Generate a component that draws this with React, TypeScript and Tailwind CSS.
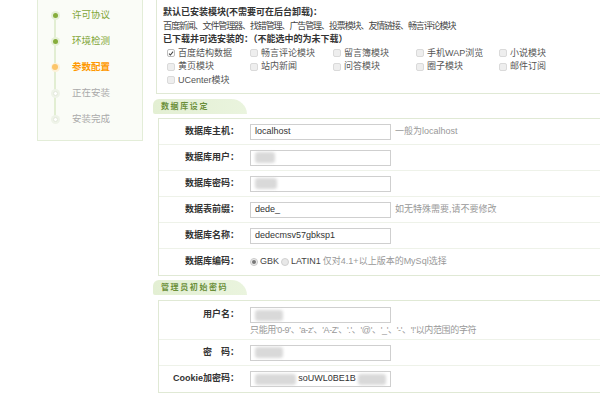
import React from 'react'

const steps = [
  { label: '许可协议', state: 'done' },
  { label: '环境检测', state: 'done' },
  { label: '参数配置', state: 'current' },
  { label: '正在安装', state: 'todo' },
  { label: '安装完成', state: 'todo' },
]

const modules = [
  { name: '百度结构数据', checked: true },
  { name: '畅言评论模块' },
  { name: '留言簿模块' },
  { name: '手机WAP浏览' },
  { name: '小说模块' },
  { name: '黄页模块' },
  { name: '站内新闻' },
  { name: '问答模块' },
  { name: '圈子模块' },
  { name: '邮件订阅' },
  { name: 'UCenter模块' },
]

function Dot({ state }: { state: string }) {
  if (state === 'done')
    return (
      <span className="flex h-[9px] w-[9px] items-center justify-center rounded-full bg-[#e6f0d8]">
        <span className="h-[5px] w-[5px] rounded-full bg-[#86ad3c]" />
      </span>
    )
  if (state === 'current')
    return (
      <span className="flex h-[9px] w-[9px] items-center justify-center rounded-full bg-[#fdf0d8]">
        <span className="h-[6px] w-[6px] rounded-full bg-[#fcc56a]" />
      </span>
    )
  return (
    <span className="flex h-[9px] w-[9px] items-center justify-center rounded-full bg-[#eef3e8]">
      <span className="h-[5px] w-[5px] rounded-full border border-[#e3e9dc] bg-white" />
    </span>
  )
}

function Checkbox({ checked }: { checked?: boolean }) {
  return (
    <span
      className={`flex h-[8px] w-[8px] shrink-0 items-center justify-center rounded-[2px] border ${
        checked ? 'border-[#bdbdbd] bg-white' : 'border-[#dadada] bg-[#eeeeee]'
      }`}
    >
      {checked && (
        <svg viewBox="0 0 8 8" className="h-[7px] w-[7px]">
          <path d="M1.3 4.2 L3.2 6 L6.8 1.6" fill="none" stroke="#444" strokeWidth="1.4" />
        </svg>
      )}
    </span>
  )
}

function Tab({ title }: { title?: string }) {
  return (
    <div className="flex h-[15px] w-[94px] items-center rounded-tl-[6px] rounded-bl-[2px] rounded-tr-[16px_15px] bg-gradient-to-r from-[#e3efd3] to-[#eaf4de] pl-[8px] text-[8px] font-bold tracking-[1.6px] text-[#6b8f3a]">
      {title}
    </div>
  )
}

function Blur({ w }: { w: number }) {
  return <span className="h-[11px] rounded-[3px] bg-[#d9d9d9] blur-[1.5px]" style={{ width: w }} />
}

function Row({
  label,
  children,
  hint,
}: {
  label: string
  children?: React.ReactNode
  hint?: string
}) {
  return (
    <div className="flex h-[26px] items-center border-b border-[#eef2e9] last:border-b-0">
      <div className="w-[80px] text-right font-bold text-[#333]">{label}</div>
      <div className="ml-[11px] flex h-[16px] w-[141px] items-center gap-[2px] border border-[#cfcfcf] px-[4px] text-[#333]">
        {children}
      </div>
      {hint && <div className="ml-[4px] text-[#999]">{hint}</div>}
    </div>
  )
}

export default function App() {
  return (
    <div className="flex h-[400px] w-[600px] overflow-hidden bg-white font-['Liberation_Sans','Noto_Sans_CJK_SC',sans-serif] text-[9px] text-[#444]">
      {/* sidebar */}
      <div className="w-[153px] shrink-0 pl-[37px]">
        <div className="relative h-[141px] w-[106px] border border-t-0 border-[#e3edd8] bg-[#fafcf7] pt-[2px]">
          <div className="absolute left-[16px] top-[15px] h-[104px] w-[2px] bg-[#e2eed3]" />
          {steps.map((s) => (
            <div key={s.label} className="relative flex h-[26px] items-center pl-[12px]">
              <div className="flex w-[10px] justify-center">
                <Dot state={s.state} />
              </div>
              <span
                className={`ml-[12px] text-[9.5px] ${
                  s.state === 'done'
                    ? 'text-[#7fa536]'
                    : s.state === 'current'
                      ? 'font-bold text-[#ff9900]'
                      : 'text-[#aaa]'
                }`}
              >
                {s.label}
              </span>
            </div>
          ))}
        </div>
      </div>

      {/* main */}
      <div className="w-[470px] shrink-0">
        <div className="ml-[3px] border border-t-0 border-[#e0e9d5] pb-[6px] pl-[6px] pt-[6px] leading-[13.5px]">
          <div className="font-bold text-[#333]">默认已安装模块(不需要可在后台卸载)：</div>
          <div className="whitespace-nowrap tracking-[-1.1px]">
            百度新闻、文件管理器、找错管理、广告管理、投票模块、友情链接、畅言评论模块
          </div>
          <div className="font-bold text-[#333]">已下载并可选安装的：（不能选中的为未下载）</div>
          <div className="ml-[4px] grid grid-cols-[83px_83px_83px_83px_83px]">
            {modules.map((m) => (
              <div key={m.name} className="flex h-[13.5px] items-center gap-[3px] text-[#555]">
                <Checkbox checked={m.checked} />
                <span>{m.name}</span>
              </div>
            ))}
          </div>
        </div>

        <div className="mt-[5px]">
          <Tab title="数据库设定" />
        </div>
        <div className="ml-[5px] mt-[4px] border border-[#e0e9d5]">
          <Row label="数据库主机：" hint="一般为localhost">
            localhost
          </Row>
          <Row label="数据库用户：">
            <Blur w={20} />
          </Row>
          <Row label="数据库密码：">
            <Blur w={22} />
          </Row>
          <Row label="数据表前缀：" hint="如无特殊需要,请不要修改">
            dede_
          </Row>
          <Row label="数据库名称：">dedecmsv57gbksp1</Row>
          <div className="flex h-[26px] items-center">
            <div className="w-[80px] text-right font-bold text-[#333]">数据库编码：</div>
            <div className="ml-[11px] flex items-center gap-[2px] text-[#444]">
              <span className="flex h-[8px] w-[8px] items-center justify-center rounded-full border border-[#c8c8c8] bg-[#eee]">
                <span className="h-[4px] w-[4px] rounded-full bg-[#777]" />
              </span>
              <span>GBK</span>
              <span className="h-[8px] w-[8px] rounded-full border border-[#d0d0d0] bg-[#e8e8e8]" />
              <span>LATIN1</span>
              <span className="text-[#999]">仅对4.1+以上版本的MySql选择</span>
            </div>
          </div>
        </div>

        <div className="mt-[4px]">
          <Tab title="管理员初始密码" />
        </div>
        <div className="ml-[5px] mt-[5px] border border-[#e0e9d5]">
          <div className="flex h-[39px] items-start border-b border-[#eef2e9] pt-[6px]">
            <div className="flex h-[16px] w-[80px] items-center justify-end font-bold text-[#333]">
              用户名：
            </div>
            <div className="ml-[11px] flex flex-col">
              <div className="flex h-[16px] w-[141px] items-center border border-[#cfcfcf] px-[4px]">
                <Blur w={28} />
              </div>
              <div className="mt-[1px] whitespace-nowrap leading-[12px] tracking-[-0.35px] text-[#999]">
                只能用'0-9'、'a-z'、'A-Z'、'.'、'@'、'_'、'-'、'!'以内范围的字符
              </div>
            </div>
          </div>
          <Row label="密　码：">
            <Blur w={28} />
          </Row>
          <Row label="Cookie加密码：">
            <Blur w={44} />
            <span>soUWL0BE1B</span>
            <Blur w={30} />
          </Row>
        </div>

        <div className="mt-[7px]">
          <Tab />
        </div>
      </div>
    </div>
  )
}
